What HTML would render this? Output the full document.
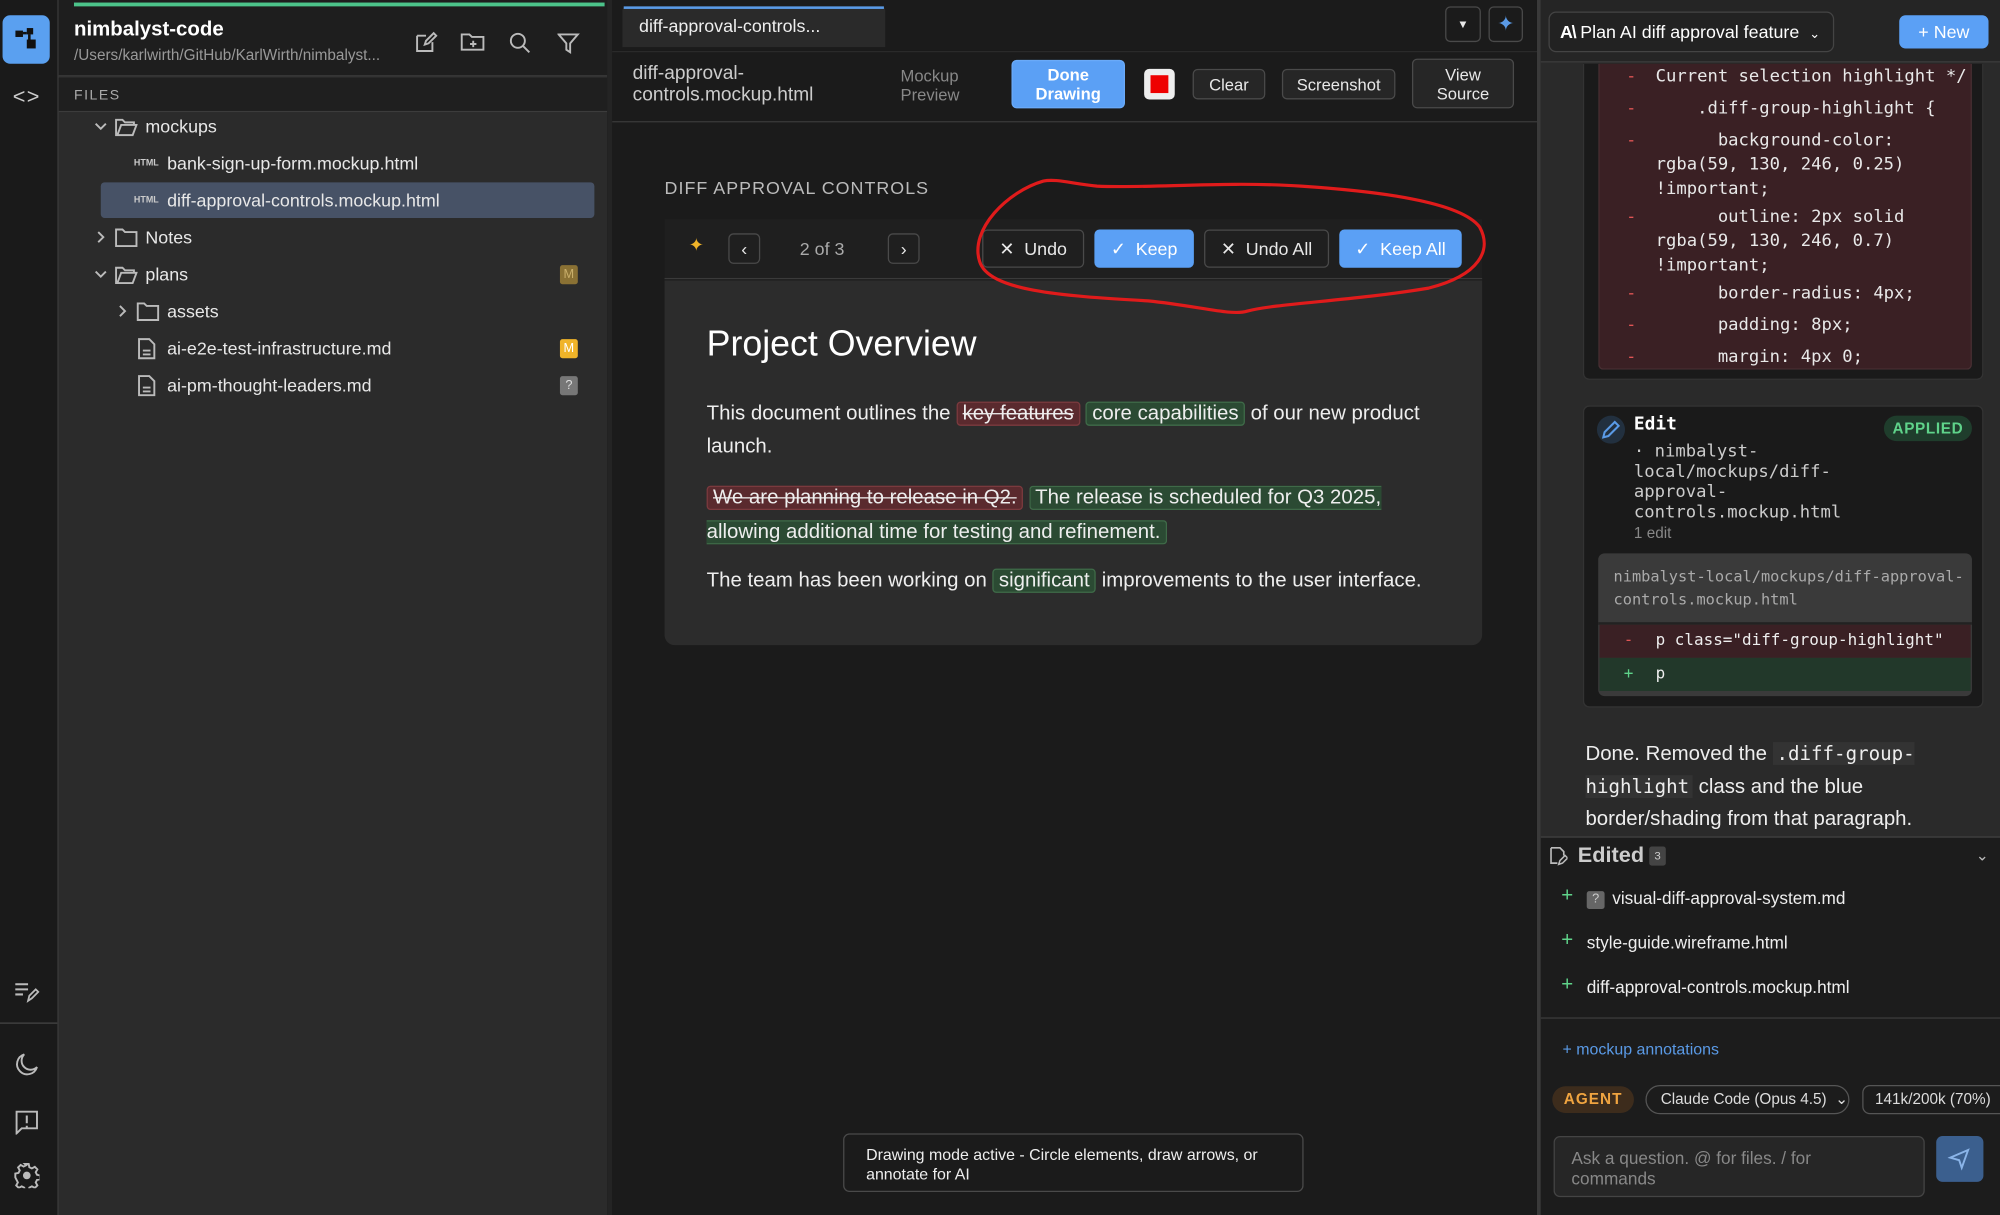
<!DOCTYPE html>
<html><head><meta charset="utf-8">
<style>
*{box-sizing:border-box;margin:0;padding:0}
html,body{width:2000px;height:1215px;overflow:hidden;background:#1b1b1b}
#w{position:absolute;left:0;top:0;width:1568px;height:953px;transform:scale(1.27551,1.27492);transform-origin:0 0;font-family:"Liberation Sans",sans-serif;color:#e6e6e6;overflow:hidden;background:#1b1b1b}
.a{position:absolute}
.mono{font-family:"DejaVu Sans Mono","Liberation Mono",monospace}
.btn{position:absolute;border:1px solid #4a4a4a;border-radius:4px;background:#262626;color:#e8e8e8;font-size:13px;display:flex;align-items:center;justify-content:center;text-align:center;line-height:15px}
.row{position:absolute;font-size:14px;color:#e8e8e8;height:20px;line-height:20px;white-space:nowrap}
.ic{stroke:#bbb;fill:none;stroke-width:1.5}
.del{background:#5a2a2e;border:1px solid #7a3a3e;border-radius:3px;text-decoration:line-through;padding:0 4px}
.add{background:#2b4a33;border:1px solid #3f6a48;border-radius:3px;padding:0 4px}
.cl{position:absolute;font-size:13.5px;color:#e8e8e8;white-space:pre;line-height:19px}
.mn{position:absolute;left:1275px;color:#e05555;font-size:13px}
</style></head><body><div id="w">

<!-- activity bar -->
<div class="a" style="left:0;top:0;width:45px;height:953px;background:#1a1a1a"></div>
<div class="a" style="left:2px;top:12px;width:37px;height:38px;background:#5aa0f0;border-radius:6px"></div>
<svg class="a" style="left:12px;top:22px" width="18" height="18" viewBox="0 0 18 18"><rect x="0" y="2" width="6" height="5" fill="#111"/><rect x="9" y="0" width="5" height="5" fill="#111"/><rect x="9" y="9" width="7" height="7" fill="#111"/><path d="M6 4h3M11 5v6" stroke="#111" stroke-width="2"/></svg>
<div class="a" style="left:10px;top:66px;font-size:17px;color:#ccc;letter-spacing:1px">&lt;&gt;</div>
<svg class="a" style="left:11px;top:769px" width="20" height="18"><path d="M1 3h10M1 7h10M1 11h6" stroke="#bbb" stroke-width="1.6"/><path d="M11 16l1-4 5-5 2 2-5 5z" stroke="#bbb" fill="none" stroke-width="1.4"/></svg>
<div class="a" style="left:0;top:802px;width:45px;height:1px;background:#444"></div>
<svg class="a" style="left:11px;top:825px" width="20" height="20"><path d="M8 2a8 8 0 1 0 10 10A6.5 6.5 0 0 1 8 2z" class="ic"/></svg>
<svg class="a" style="left:11px;top:870px" width="20" height="20"><path d="M2 2h16v13H6l-4 4z" class="ic"/><path d="M10 5v6M10 13v1.5" stroke="#bbb" stroke-width="1.6"/></svg>
<svg class="a" style="left:11px;top:912px" width="20" height="20" viewBox="0 0 20 20"><circle cx="10" cy="10" r="3" fill="#bbb"/><path d="M8.5 1h3l.5 2.5 2 1 2.3-1.3 2 2-1.3 2.3 1 2 2.5.5v3l-2.5.5-1 2 1.3 2.3-2 2-2.3-1.3-2 1-.5 2.5h-3l-.5-2.5-2-1-2.3 1.3-2-2 1.3-2.3-1-2L1 11.5v-3l2.5-.5 1-2-1.3-2.3 2-2 2.3 1.3 2-1z" class="ic" stroke-width="1.3"/></svg>

<!-- left sidebar -->
<div class="a" style="left:45px;top:0;width:431px;height:953px;background:#2b2b2b;border-left:1px solid #3a3a3a"></div>
<div class="a" style="left:46px;top:0;width:430px;height:60px;background:#1e1e1e;border-bottom:1px solid #3c3c3c"></div>
<div class="a" style="left:58px;top:2px;width:416px;height:3px;background:#4cc38a"></div>
<div class="a" style="left:58px;top:15px;font-size:16px;font-weight:bold;color:#fff">nimbalyst-code</div>
<div class="a" style="left:58px;top:36px;font-size:12px;color:#999">/Users/karlwirth/GitHub/KarlWirth/nimbalyst...</div>
<svg class="a" style="left:324px;top:23px" width="20" height="20"><path d="M3 5h7M3 5v12h12v-7" class="ic"/><path d="M9 12l1-3 6-6 2 2-6 6z" class="ic"/></svg>
<svg class="a" style="left:361px;top:24px" width="20" height="18"><path d="M1 3h6l2 2h9v10H1z" class="ic"/><path d="M10 8v5M7.5 10.5h5" class="ic"/></svg>
<svg class="a" style="left:398px;top:24px" width="20" height="20"><circle cx="8" cy="8" r="5.5" class="ic"/><path d="M12 12l5 5" class="ic" stroke-width="1.8"/></svg>
<svg class="a" style="left:437px;top:25px" width="18" height="18"><path d="M1 2h15l-6 7v7l-3-2V9z" class="ic"/></svg>
<div class="a" style="left:46px;top:61px;width:430px;height:27px;background:#1f1f1f;border-bottom:1px solid #3c3c3c"></div>
<div class="a" style="left:58px;top:69px;font-size:11px;color:#aaa;letter-spacing:1.2px">FILES</div>
<div class="a" style="left:79px;top:143px;width:387px;height:28px;background:#475266;border-radius:3px"></div>
<svg class="a" style="left:73px;top:93px" width="12" height="12"><path d="M2 4l4 4 4-4" class="ic"/></svg>
<svg class="a" style="left:90px;top:92px" width="18" height="15"><path d="M1 2h5l2 2h7v2H5l-3 8H1zM2 14l3-8h12l-3 8z" class="ic" stroke-width="1.3"/></svg>
<div class="row" style="left:114px;top:89px">mockups</div>
<div class="a" style="left:105px;top:125px;font-size:7px;font-weight:bold;color:#ccc">HTML</div>
<div class="row" style="left:131px;top:118px">bank-sign-up-form.mockup.html</div>
<div class="a" style="left:105px;top:154px;font-size:7px;font-weight:bold;color:#ccc">HTML</div>
<div class="row" style="left:131px;top:147px">diff-approval-controls.mockup.html</div>
<svg class="a" style="left:73px;top:180px" width="12" height="12"><path d="M4 2l4 4-4 4" class="ic"/></svg>
<svg class="a" style="left:90px;top:179px" width="18" height="15"><path d="M1 1h5l2 2h9v11H1z" class="ic" stroke-width="1.3"/></svg>
<div class="row" style="left:114px;top:176px">Notes</div>
<svg class="a" style="left:73px;top:209px" width="12" height="12"><path d="M2 4l4 4 4-4" class="ic"/></svg>
<svg class="a" style="left:90px;top:208px" width="18" height="15"><path d="M1 2h5l2 2h7v2H5l-3 8H1zM2 14l3-8h12l-3 8z" class="ic" stroke-width="1.3"/></svg>
<div class="row" style="left:114px;top:205px">plans</div>
<div class="a" style="left:439px;top:208px;width:14px;height:15px;background:#8a7134;border-radius:2px;font-size:10px;color:#c9ae6a;text-align:center;line-height:15px">M</div>
<svg class="a" style="left:90px;top:238px" width="12" height="12"><path d="M4 2l4 4-4 4" class="ic"/></svg>
<svg class="a" style="left:107px;top:237px" width="18" height="15"><path d="M1 1h5l2 2h9v11H1z" class="ic" stroke-width="1.3"/></svg>
<div class="row" style="left:131px;top:234px">assets</div>
<svg class="a" style="left:108px;top:265px" width="14" height="17"><path d="M1 1h8l4 4v11H1z" class="ic" stroke-width="1.3"/><path d="M4 10h6M4 13h6" class="ic" stroke-width="1.2"/></svg>
<div class="row" style="left:131px;top:263px">ai-e2e-test-infrastructure.md</div>
<div class="a" style="left:439px;top:266px;width:14px;height:15px;background:#f0b429;border-radius:2px;font-size:10px;color:#fff;text-align:center;line-height:15px">M</div>
<svg class="a" style="left:108px;top:294px" width="14" height="17"><path d="M1 1h8l4 4v11H1z" class="ic" stroke-width="1.3"/><path d="M4 10h6M4 13h6" class="ic" stroke-width="1.2"/></svg>
<div class="row" style="left:131px;top:292px">ai-pm-thought-leaders.md</div>
<div class="a" style="left:439px;top:295px;width:14px;height:15px;background:#777;border-radius:2px;font-size:10px;color:#ddd;text-align:center;line-height:15px">?</div>
<div class="a" style="left:476px;top:0;width:4px;height:953px;background:#242424"></div>

<!-- center -->
<div class="a" style="left:480px;top:0;width:725px;height:953px;background:#1b1b1b"></div>
<div class="a" style="left:488px;top:5px;width:206px;height:32px;background:#2a2a2a;border-radius:3px 3px 0 0"></div>
<div class="a" style="left:489px;top:5px;width:204px;height:2px;background:#5a9ae6"></div>
<div class="a" style="left:501px;top:12px;font-size:14px;color:#eee">diff-approval-controls...</div>
<div class="btn" style="left:1133px;top:5px;width:28px;height:28px;background:#1b1b1b;font-size:9px">▼</div>
<div class="btn" style="left:1167px;top:5px;width:27px;height:28px;background:#1b1b1b;color:#5a9ae6;font-size:16px">✦</div>
<div class="a" style="left:480px;top:40px;width:725px;height:1px;background:#2a2a2a"></div>
<div class="a" style="left:496px;top:49px;font-size:15px;color:#ccc;line-height:17px">diff-approval-<br>controls.mockup.html</div>
<div class="a" style="left:706px;top:52px;font-size:13px;color:#888;line-height:15px">Mockup<br>Preview</div>
<div class="btn" style="left:793px;top:47px;width:89px;height:38px;background:#5ba0f5;border-color:#6aaaf8;color:#fff;font-weight:bold">Done<br>Drawing</div>
<div class="a" style="left:897px;top:54px;width:24px;height:24px;background:#eee;border-radius:4px"></div>
<div class="a" style="left:902px;top:59px;width:14px;height:14px;background:#e00"></div>
<div class="btn" style="left:935px;top:54px;width:57px;height:24px">Clear</div>
<div class="btn" style="left:1005px;top:54px;width:89px;height:24px">Screenshot</div>
<div class="btn" style="left:1107px;top:46px;width:80px;height:39px">View<br>Source</div>
<div class="a" style="left:480px;top:95px;width:725px;height:1px;background:#3a3a3a"></div>

<div class="a" style="left:521px;top:139px;font-size:14px;color:#bbb;letter-spacing:0.8px">DIFF APPROVAL CONTROLS</div>
<div class="a" style="left:521px;top:172px;width:641px;height:47px;background:#1f1f1f;border-bottom:1px solid #3a3a3a"></div>
<div class="a" style="left:540px;top:184px;color:#f0b429;font-size:14px">✦</div>
<div class="btn" style="left:571px;top:183px;width:25px;height:24px;background:#1f1f1f;font-size:14px">‹</div>
<div class="a" style="left:627px;top:187px;font-size:14px;color:#aaa">2 of 3</div>
<div class="btn" style="left:696px;top:183px;width:25px;height:24px;background:#1f1f1f;font-size:14px">›</div>
<div class="btn" style="left:770px;top:180px;width:80px;height:30px;background:#1f1f1f;font-size:14px">✕&nbsp; Undo</div>
<div class="btn" style="left:858px;top:180px;width:78px;height:30px;background:#5ba0f5;border-color:#5ba0f5;color:#fff;font-size:14px">✓&nbsp; Keep</div>
<div class="btn" style="left:944px;top:180px;width:98px;height:30px;background:#1f1f1f;font-size:14px">✕&nbsp; Undo All</div>
<div class="btn" style="left:1050px;top:180px;width:96px;height:30px;background:#5ba0f5;border-color:#5ba0f5;color:#fff;font-size:14px">✓&nbsp; Keep All</div>

<div class="a" style="left:521px;top:220px;width:641px;height:286px;background:#2c2c2c;border-radius:0 0 8px 8px"></div>
<div class="a" style="left:554px;top:254px;font-size:28px;color:#fff">Project Overview</div>
<div class="a" style="left:554px;top:312px;width:590px;font-size:16px;line-height:26px;color:#eee">This document outlines the <span class="del">key features</span> <span class="add">core capabilities</span> of our new product launch.</div>
<div class="a" style="left:554px;top:377px;width:590px;font-size:16px;line-height:27px;color:#eee"><span class="del">We are planning to release in Q2.</span> <span class="add">The release is scheduled for Q3 2025, allowing additional time for testing and refinement.</span></div>
<div class="a" style="left:554px;top:443px;width:600px;font-size:16px;line-height:26px;color:#eee">The team has been working on <span class="add">significant</span> improvements to the user interface.</div>

<svg class="a" style="left:0;top:0" width="1568" height="953"><path d="M818 142 C790 150 760 180 768 205 C775 228 830 232 900 236 C940 240 965 248 978 244 C1000 238 1060 236 1120 226 C1160 216 1170 196 1160 178 C1145 158 1080 150 1020 146 C960 142 900 148 860 146 C840 144 828 140 818 142 Z" fill="none" stroke="#e01b1b" stroke-width="2.5"/></svg>

<div class="a" style="left:661px;top:889px;width:361px;height:46px;background:#1b1b1b;border:1px solid #4a4a4a;border-radius:5px;font-size:12.5px;color:#eee;padding:9px 17px;line-height:15px">Drawing mode active - Circle elements, draw arrows, or annotate for AI</div>

<!-- right panel -->
<div class="a" style="left:1205px;top:0;width:3px;height:953px;background:#3a3a3a"></div>
<div class="a" style="left:1208px;top:0;width:360px;height:657px;background:#2a2a2a"></div>
<div class="a" style="left:1208px;top:0;width:360px;height:49px;background:#252525;border-bottom:1px solid #3c3c3c"></div>
<div class="a" style="left:1214px;top:9px;width:224px;height:32px;border:1px solid #444;border-radius:6px;background:#222"></div>
<div class="a" style="left:1223px;top:17px;font-size:14px;color:#fff;white-space:nowrap"><b style="letter-spacing:-1px">A\</b> Plan AI diff approval feature&nbsp; <span style="font-size:10px">⌄</span></div>
<div class="a" style="left:1489px;top:12px;width:70px;height:26px;background:#5ba0f5;border-radius:5px;color:#fff;font-size:14px;text-align:center;line-height:26px">+ New</div>

<div class="a" style="left:1241px;top:50px;width:314px;height:248px;background:#1a1a1a;border:1px solid #333;border-top:none;border-radius:0 0 5px 5px"></div>
<div class="a" style="left:1253px;top:50px;width:293px;height:240px;background:#3a2024;border:1px solid #4a3034;border-top:none;border-radius:0 0 4px 4px"></div>
<div class="mn mono" style="top:53px">-</div><div class="cl mono" style="left:1298px;top:51px">Current selection highlight */</div>
<div class="mn mono" style="top:78px">-</div><div class="cl mono" style="left:1298px;top:76px">    .diff-group-highlight {</div>
<div class="mn mono" style="top:103px">-</div><div class="cl mono" style="left:1298px;top:101px">      background-color:
rgba(59, 130, 246, 0.25)
!important;</div>
<div class="mn mono" style="top:163px">-</div><div class="cl mono" style="left:1298px;top:161px">      outline: 2px solid
rgba(59, 130, 246, 0.7)
!important;</div>
<div class="mn mono" style="top:223px">-</div><div class="cl mono" style="left:1298px;top:221px">      border-radius: 4px;</div>
<div class="mn mono" style="top:248px">-</div><div class="cl mono" style="left:1298px;top:246px">      padding: 8px;</div>
<div class="mn mono" style="top:273px">-</div><div class="cl mono" style="left:1298px;top:271px">      margin: 4px 0;</div>

<div class="a" style="left:1241px;top:318px;width:314px;height:237px;background:#1a1a1a;border:1px solid #333;border-radius:5px"></div>
<div class="a" style="left:1252px;top:326px;width:22px;height:22px;border-radius:50%;background:#22303f"></div>
<svg class="a" style="left:1255px;top:329px" width="16" height="16"><path d="M2 14l1-4 8-8 3 3-8 8z" stroke="#5a9ae6" fill="none" stroke-width="1.6"/></svg>
<div class="a mono" style="left:1281px;top:325px;font-size:14px;font-weight:bold;color:#fff">Edit</div>
<div class="a" style="left:1477px;top:326px;width:69px;height:20px;background:#1f3d2c;border-radius:10px;color:#5fd38a;font-size:12px;font-weight:bold;text-align:center;line-height:20px;letter-spacing:0.5px">APPLIED</div>
<div class="cl mono" style="left:1281px;top:346px;line-height:16px;font-size:13.5px;color:#ccc">· nimbalyst-
local/mockups/diff-
approval-
controls.mockup.html</div>
<div class="a" style="left:1281px;top:411px;font-size:12px;color:#888">1 edit</div>
<div class="a" style="left:1253px;top:434px;width:293px;height:112px;background:#3a3a3a;border-radius:5px;overflow:hidden">
 <div class="mono" style="position:absolute;left:12px;top:9px;font-size:12px;color:#aaa;line-height:18px">nimbalyst-local/mockups/diff-approval-<br>controls.mockup.html</div>
 <div style="position:absolute;left:0;top:54px;width:293px;height:2px;background:#222"></div>
 <div style="position:absolute;left:1px;top:56px;width:291px;height:26px;background:#3a2024"></div>
 <div style="position:absolute;left:1px;top:82px;width:291px;height:26px;background:#22382a"></div>
 <div class="mono" style="position:absolute;left:20px;top:60px;font-size:12.5px;color:#e05555">-</div>
 <div class="mono" style="position:absolute;left:45px;top:60px;font-size:12.5px;color:#eee;white-space:nowrap">p class="diff-group-highlight"</div>
 <div class="mono" style="position:absolute;left:20px;top:86px;font-size:12.5px;color:#5fd38a">+</div>
 <div class="mono" style="position:absolute;left:45px;top:86px;font-size:12.5px;color:#eee">p</div>
</div>
<div class="a" style="left:1243px;top:579px;width:300px;font-size:16px;line-height:25.5px;color:#eee">Done. Removed the <span class="mono" style="background:#333;padding:0 3px;font-size:15px">.diff-group-<br>highlight</span> class and the blue border/shading from that paragraph.</div>

<div class="a" style="left:1208px;top:656px;width:360px;height:297px;background:#1c1c1c;border-top:1px solid #444"></div>
<svg class="a" style="left:1215px;top:664px" width="14" height="15"><path d="M1 1h7l3 3v3M1 1v12h5" stroke="#bbb" fill="none" stroke-width="1.3"/><path d="M7 14l1-3 4-4 2 2-4 4z" stroke="#bbb" fill="none" stroke-width="1.2"/></svg>
<div class="a" style="left:1237px;top:661px;font-size:17px;font-weight:bold;color:#ccc">Edited</div>
<div class="a" style="left:1293px;top:664px;width:13px;height:15px;background:#444;border-radius:2px;font-size:9px;color:#ccc;text-align:center;line-height:15px">3</div>
<div class="a" style="left:1549px;top:664px;font-size:12px;color:#bbb">⌄</div>
<div class="a" style="left:1224px;top:694px;color:#5fd38a;font-size:16px">+</div>
<div class="a" style="left:1244px;top:699px;width:14px;height:14px;background:#666;border-radius:2px;font-size:10px;color:#ccc;text-align:center;line-height:14px">?</div>
<div class="a" style="left:1264px;top:697px;font-size:13.5px;color:#eee">visual-diff-approval-system.md</div>
<div class="a" style="left:1224px;top:729px;color:#5fd38a;font-size:16px">+</div>
<div class="a" style="left:1244px;top:732px;font-size:13.5px;color:#eee">style-guide.wireframe.html</div>
<div class="a" style="left:1224px;top:764px;color:#5fd38a;font-size:16px">+</div>
<div class="a" style="left:1244px;top:767px;font-size:13.5px;color:#eee">diff-approval-controls.mockup.html</div>
<div class="a" style="left:1208px;top:798px;width:360px;height:1px;background:#3c3c3c"></div>
<div class="a" style="left:1225px;top:816px;font-size:12.5px;color:#5a9ae6">+ mockup annotations</div>
<div class="a" style="left:1217px;top:852px;width:64px;height:21px;background:#3d2c1c;border-radius:11px;color:#f0a440;font-size:12px;font-weight:bold;text-align:center;line-height:21px;letter-spacing:0.8px">AGENT</div>
<div class="a" style="left:1290px;top:851px;width:160px;height:23px;border:1px solid #555;border-radius:12px;font-size:12px;color:#ddd;line-height:21px;padding-left:11px;white-space:nowrap">Claude Code (Opus 4.5) &nbsp;⌄</div>
<div class="a" style="left:1460px;top:851px;width:115px;height:23px;border:1px solid #555;border-radius:6px;font-size:12px;color:#ddd;line-height:21px;padding-left:9px;white-space:nowrap">141k/200k (70%)</div>
<div class="a" style="left:1218px;top:891px;width:291px;height:48px;background:#262626;border:1px solid #444;border-radius:5px;font-size:13.5px;color:#888;padding:9px 13px;line-height:16px"><div style="width:215px">Ask a question. @ for files. / for commands</div></div>
<div class="a" style="left:1518px;top:891px;width:37px;height:36px;background:#3b5f8e;border-radius:5px"></div>
<svg class="a" style="left:1527px;top:900px" width="18" height="18"><path d="M2 8L16 2 11 16 9 10z" stroke="#8ab4e8" fill="none" stroke-width="1.5"/></svg>
</div></body></html>
